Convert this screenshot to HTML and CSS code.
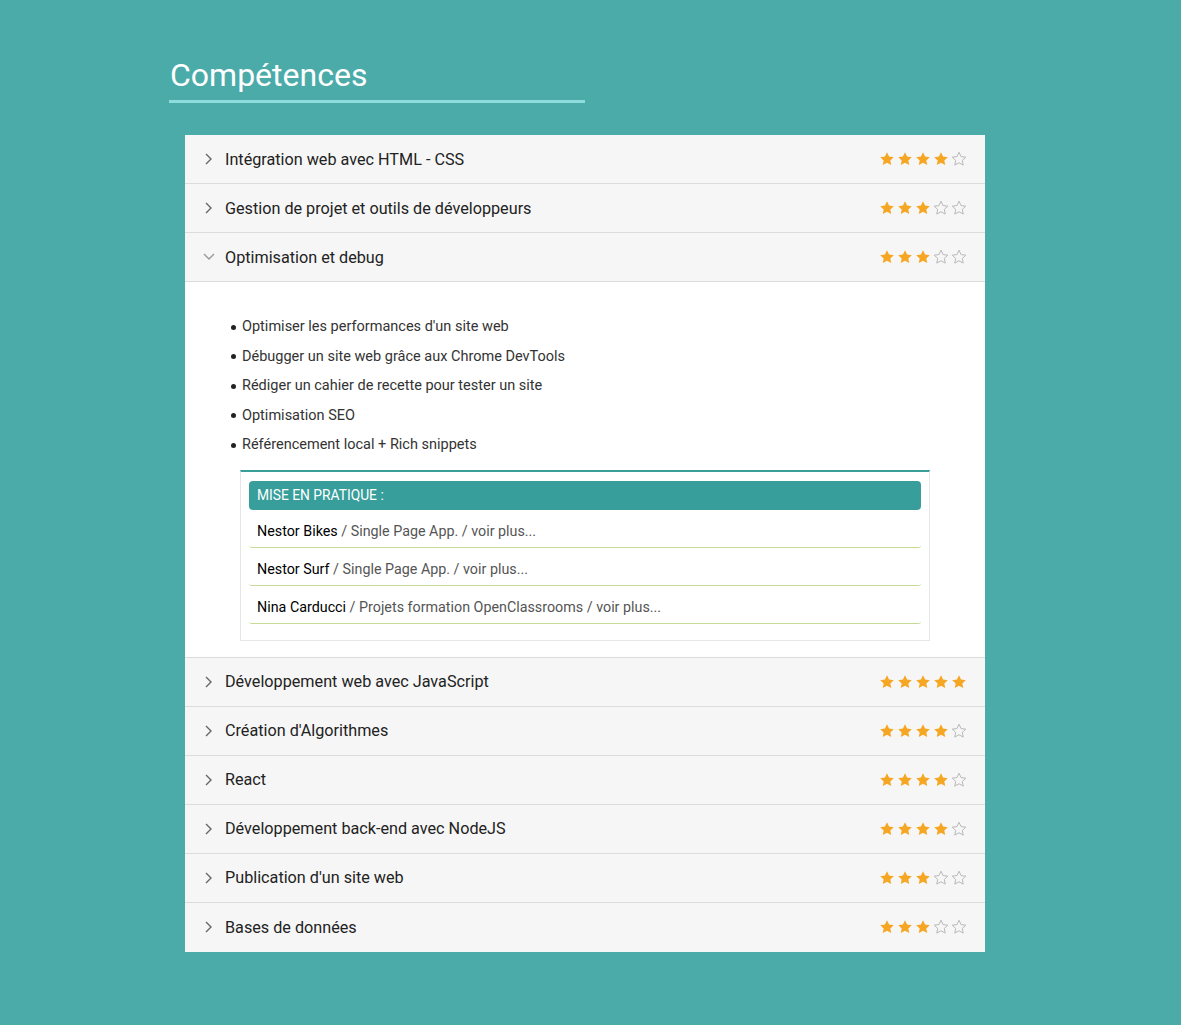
FILE: index.html
```html
<!DOCTYPE html>
<html lang="fr">
<head>
<meta charset="utf-8">
<title>Compétences</title>
<link rel="stylesheet" href="styles.css">
</head>
<body>
<svg width="0" height="0" class="defs">
  <defs>
    <path id="star" d="M8 1.2l2.05 4.4 4.75.55-3.5 3.25.93 4.7L8 11.75 3.77 14.1l.93-4.7L1.2 6.15l4.75-.55z"/>
    <polyline id="chev" points="1,1 6,6 1,11" fill="none" stroke-width="1.4"/>
  </defs>
</svg>
<main class="page">
  <h2 class="title">Compétences</h2>
  <div class="card">
    <div class="row">
      <svg class="chev" viewBox="0 0 8 12" width="8" height="12"><use href="#chev"/></svg>
      <span class="label">Intégration web avec HTML - CSS</span>
      <span class="stars"><svg viewBox="0 0 16 16" class="on"><use href="#star"/></svg><svg viewBox="0 0 16 16" class="on"><use href="#star"/></svg><svg viewBox="0 0 16 16" class="on"><use href="#star"/></svg><svg viewBox="0 0 16 16" class="on"><use href="#star"/></svg><svg viewBox="0 0 16 16" class="off"><use href="#star"/></svg></span>
    </div>
    <div class="row">
      <svg class="chev" viewBox="0 0 8 12" width="8" height="12"><use href="#chev"/></svg>
      <span class="label">Gestion de projet et outils de développeurs</span>
      <span class="stars"><svg viewBox="0 0 16 16" class="on"><use href="#star"/></svg><svg viewBox="0 0 16 16" class="on"><use href="#star"/></svg><svg viewBox="0 0 16 16" class="on"><use href="#star"/></svg><svg viewBox="0 0 16 16" class="off"><use href="#star"/></svg><svg viewBox="0 0 16 16" class="off"><use href="#star"/></svg></span>
    </div>
    <div class="row open">
      <svg class="chev down" viewBox="0 0 12 8" width="12" height="8"><polyline points="1,1 6,6 11,1" fill="none" stroke-width="1.4"/></svg>
      <span class="label">Optimisation et debug</span>
      <span class="stars"><svg viewBox="0 0 16 16" class="on"><use href="#star"/></svg><svg viewBox="0 0 16 16" class="on"><use href="#star"/></svg><svg viewBox="0 0 16 16" class="on"><use href="#star"/></svg><svg viewBox="0 0 16 16" class="off"><use href="#star"/></svg><svg viewBox="0 0 16 16" class="off"><use href="#star"/></svg></span>
    </div>
    <div class="panel">
      <ul class="skills">
        <li>Optimiser les performances d'un site web</li>
        <li>Débugger un site web grâce aux Chrome DevTools</li>
        <li>Rédiger un cahier de recette pour tester un site</li>
        <li>Optimisation SEO</li>
        <li>Référencement local + Rich snippets</li>
      </ul>
      <div class="practice">
        <div class="practice-head">MISE EN PRATIQUE :</div>
        <div class="project"><b>Nestor Bikes</b> / Single Page App. / voir plus...</div>
        <div class="project"><b>Nestor Surf</b> / Single Page App. / voir plus...</div>
        <div class="project"><b>Nina Carducci</b> / Projets formation OpenClassrooms / voir plus...</div>
      </div>
    </div>
    <div class="row">
      <svg class="chev" viewBox="0 0 8 12" width="8" height="12"><use href="#chev"/></svg>
      <span class="label">Développement web avec JavaScript</span>
      <span class="stars"><svg viewBox="0 0 16 16" class="on"><use href="#star"/></svg><svg viewBox="0 0 16 16" class="on"><use href="#star"/></svg><svg viewBox="0 0 16 16" class="on"><use href="#star"/></svg><svg viewBox="0 0 16 16" class="on"><use href="#star"/></svg><svg viewBox="0 0 16 16" class="on"><use href="#star"/></svg></span>
    </div>
    <div class="row">
      <svg class="chev" viewBox="0 0 8 12" width="8" height="12"><use href="#chev"/></svg>
      <span class="label">Création d'Algorithmes</span>
      <span class="stars"><svg viewBox="0 0 16 16" class="on"><use href="#star"/></svg><svg viewBox="0 0 16 16" class="on"><use href="#star"/></svg><svg viewBox="0 0 16 16" class="on"><use href="#star"/></svg><svg viewBox="0 0 16 16" class="on"><use href="#star"/></svg><svg viewBox="0 0 16 16" class="off"><use href="#star"/></svg></span>
    </div>
    <div class="row">
      <svg class="chev" viewBox="0 0 8 12" width="8" height="12"><use href="#chev"/></svg>
      <span class="label">React</span>
      <span class="stars"><svg viewBox="0 0 16 16" class="on"><use href="#star"/></svg><svg viewBox="0 0 16 16" class="on"><use href="#star"/></svg><svg viewBox="0 0 16 16" class="on"><use href="#star"/></svg><svg viewBox="0 0 16 16" class="on"><use href="#star"/></svg><svg viewBox="0 0 16 16" class="off"><use href="#star"/></svg></span>
    </div>
    <div class="row">
      <svg class="chev" viewBox="0 0 8 12" width="8" height="12"><use href="#chev"/></svg>
      <span class="label">Développement back-end avec NodeJS</span>
      <span class="stars"><svg viewBox="0 0 16 16" class="on"><use href="#star"/></svg><svg viewBox="0 0 16 16" class="on"><use href="#star"/></svg><svg viewBox="0 0 16 16" class="on"><use href="#star"/></svg><svg viewBox="0 0 16 16" class="on"><use href="#star"/></svg><svg viewBox="0 0 16 16" class="off"><use href="#star"/></svg></span>
    </div>
    <div class="row">
      <svg class="chev" viewBox="0 0 8 12" width="8" height="12"><use href="#chev"/></svg>
      <span class="label">Publication d'un site web</span>
      <span class="stars"><svg viewBox="0 0 16 16" class="on"><use href="#star"/></svg><svg viewBox="0 0 16 16" class="on"><use href="#star"/></svg><svg viewBox="0 0 16 16" class="on"><use href="#star"/></svg><svg viewBox="0 0 16 16" class="off"><use href="#star"/></svg><svg viewBox="0 0 16 16" class="off"><use href="#star"/></svg></span>
    </div>
    <div class="row last">
      <svg class="chev" viewBox="0 0 8 12" width="8" height="12"><use href="#chev"/></svg>
      <span class="label">Bases de données</span>
      <span class="stars"><svg viewBox="0 0 16 16" class="on"><use href="#star"/></svg><svg viewBox="0 0 16 16" class="on"><use href="#star"/></svg><svg viewBox="0 0 16 16" class="on"><use href="#star"/></svg><svg viewBox="0 0 16 16" class="off"><use href="#star"/></svg><svg viewBox="0 0 16 16" class="off"><use href="#star"/></svg></span>
    </div>
  </div>
</main>
</body>
</html>
```
FILE: styles.css
```css
html, body {
  margin: 0;
  padding: 0;
}
body {
  background: #4aaba9;
  font-family: Roboto, "Liberation Sans", sans-serif;
  color: #222;
  min-height: 1025px;
}
.defs {
  position: absolute;
  width: 0;
  height: 0;
}
.page {
  padding: 56px 0 0 169px;
  width: 816px;
}
.title {
  margin: 0;
  width: 416px;
  padding: 0 0 6px 1px;
  box-sizing: border-box;
  font-size: 32px;
  font-weight: 400;
  line-height: 38px;
  color: #fff;
  border-bottom: 3px solid #8fdcdc;
}
.card {
  margin: 32px 0 0 16px;
  width: 800px;
  background: #f6f6f6;
}
.row {
  display: flex;
  align-items: center;
  height: 48px;
  padding: 0 18px 0 20px;
  border-bottom: 1px solid #dcdcdc;
  background: #f6f6f6;
}
.row.last {
  border-bottom: none;
  height: 49px;
}
.chev {
  flex: none;
  stroke: #666;
  margin-right: 12px;
}
.chev.down {
  stroke: #999;
  margin-left: -2px;
  margin-right: 10px;
}
.label {
  flex: 1;
  font-size: 16.2px;
  color: #222;
}
.stars {
  display: flex;
  gap: 2px;
}
.stars svg {
  width: 16px;
  height: 16px;
}
.stars .on {
  fill: #f5a623;
}
.stars .off {
  fill: none;
  stroke: #b9b9b9;
  stroke-width: 1;
}
.panel {
  background: #fff;
  padding: 30px 55px 16px 55px;
  border-bottom: 1px solid #dcdcdc;
}
.skills {
  margin: 0 0 10px 0;
  padding: 0 0 0 2px;
  list-style: none;
  font-size: 14.5px;
  color: #333;
}
.skills li {
  position: relative;
  line-height: 29.6px;
}
.skills li::before {
  content: "";
  position: absolute;
  left: -11px;
  top: 12.5px;
  width: 5px;
  height: 5px;
  border-radius: 50%;
  background: #222;
}
.practice {
  border: 1px solid #e6e6e6;
  border-top: 2px solid #3a9e9b;
  padding: 9px 8px 16px 8px;
  background: #fff;
}
.practice-head {
  background: #379e9b;
  color: #fff;
  font-size: 13.8px;
  height: 29px;
  line-height: 29px;
  padding: 0 8px;
  border-radius: 4px;
}
.project {
  height: 37px;
  line-height: 42px;
  padding: 0 8px;
  font-size: 14.3px;
  color: #555;
  border-bottom: 1px solid #c4dc96;
  border-radius: 0 0 3px 3px;
}
.project b {
  font-weight: 400;
  color: #000;
}
```
